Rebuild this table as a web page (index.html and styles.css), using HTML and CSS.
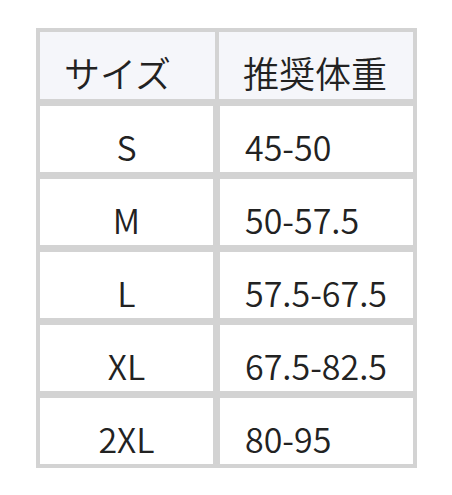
FILE: index.html
```html
<!DOCTYPE html>
<html lang="ja">
<head>
<meta charset="utf-8">
<title>サイズ表</title>
<link rel="stylesheet" href="styles.css">
</head>
<body>
<div class="size-table">
  <div class="row head">
    <div class="cell">サイズ</div>
    <div class="cell">推奨体重</div>
  </div>
  <div class="row">
    <div class="cell size">S</div>
    <div class="cell">45-50</div>
  </div>
  <div class="row">
    <div class="cell size">M</div>
    <div class="cell">50-57.5</div>
  </div>
  <div class="row">
    <div class="cell size">L</div>
    <div class="cell">57.5-67.5</div>
  </div>
  <div class="row">
    <div class="cell size">XL</div>
    <div class="cell">67.5-82.5</div>
  </div>
  <div class="row">
    <div class="cell size">2XL</div>
    <div class="cell">80-95</div>
  </div>
</div>
</body>
</html>
```

FILE: styles.css
```css
html, body {
  margin: 0;
  padding: 0;
  background: #ffffff;
}
body {
  padding: 28px 0 0 36px;
  font-family: "Noto Sans CJK JP", "Noto Sans", sans-serif;
  color: #222222;
}
.size-table {
  width: 381px;
  box-sizing: border-box;
  background: #d3d3d3;
  padding: 4px;
  display: flex;
  flex-direction: column;
  gap: 7px;
}
.row {
  display: grid;
  grid-template-columns: 173px 1fr;
  column-gap: 7px;
  height: 66px;
}
.row.head {
  grid-template-columns: 175px 1fr;
  column-gap: 4px;
  height: 67px;
}
.cell {
  background: #ffffff;
  font-size: 34px;
  font-weight: 350;
  line-height: 51px;
  display: flex;
  align-items: flex-end;
  padding-left: 25px;
}
.head .cell {
  background: #f5f6fa;
  font-size: 36px;
  padding-left: 24px;
  padding-bottom: 1px;
}
.cell.size {
  justify-content: center;
  padding-left: 0;
}
```
